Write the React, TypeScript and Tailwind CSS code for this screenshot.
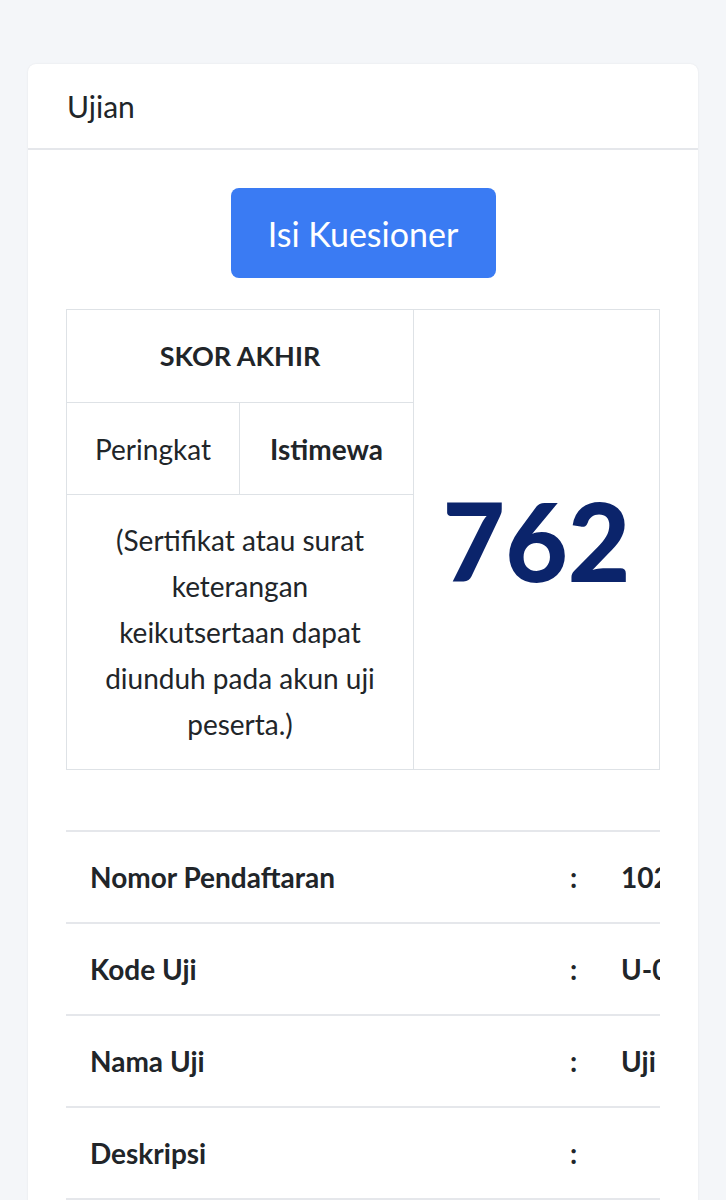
import React from "react";

const rows = [
  { label: "Nomor Pendaftaran", value: "1022300145872" },
  { label: "Kode Uji", value: "U-0023" },
  { label: "Nama Uji", value: "Uji Kemahiran Berbahasa Indonesia" },
  { label: "Deskripsi", value: "" },
];

export default function App() {
  return (
    <div
      className="min-h-[1200px] bg-[#f4f6f9] px-[28px] pt-[64px] text-[#212529]"
      style={{ fontFamily: "Lato, 'Open Sans', sans-serif" }}
    >
      <div className="rounded-[8px] bg-white shadow-[0_0_2px_rgba(0,0,0,0.08)]">
        <div className="flex h-[86px] items-center border-b-2 border-[#e5e7eb] px-[39px]">
          <h3 className="text-[30px] font-normal">Ujian</h3>
        </div>

        <div className="px-[38px] pt-[38px] pb-10">
          <div className="flex justify-center">
            <button
              type="button"
              className="h-[90px] w-[265px] rounded-[8px] bg-[#3a7bf3] text-[34px] text-white"
            >
              Isi Kuesioner
            </button>
          </div>

          <div className="mt-[31px] grid grid-cols-[347px_1fr] border border-[#dee2e6]">
            <div className="border-r border-[#dee2e6]">
              <div className="flex h-[93px] items-center justify-center border-b border-[#dee2e6] text-[27px] font-bold">
                SKOR AKHIR
              </div>
              <div className="grid h-[92px] grid-cols-2 border-b border-[#dee2e6] text-[28px]">
                <div className="flex items-center justify-center border-r border-[#dee2e6]">
                  Peringkat
                </div>
                <div className="flex items-center justify-center font-bold">Istimewa</div>
              </div>
              <p className="px-[24px] py-[22px] text-center text-[28px] leading-[46px]">
                (Sertifikat atau surat keterangan keikutsertaan dapat diunduh pada akun uji peserta.)
              </p>
            </div>
            <div className="flex items-center justify-center">
              <span className="text-[108px] font-black leading-none text-[#0b246b]">762</span>
            </div>
          </div>

          <div className="mt-[60px] w-full overflow-hidden">
            <div className="w-[900px] border-b-2 border-[#e5e7eb]">
              {rows.map((row) => (
                <div
                  key={row.label}
                  className="flex h-[92px] items-center border-t-2 border-[#e5e7eb] text-[28px] font-bold"
                >
                  <div className="w-[480px] shrink-0 pl-[24px]">{row.label}</div>
                  <div className="w-[51px] shrink-0 pl-[24px]">:</div>
                  <div className="shrink-0 whitespace-nowrap pl-[24px]">{row.value}</div>
                </div>
              ))}
            </div>
          </div>
        </div>
      </div>
    </div>
  );
}
